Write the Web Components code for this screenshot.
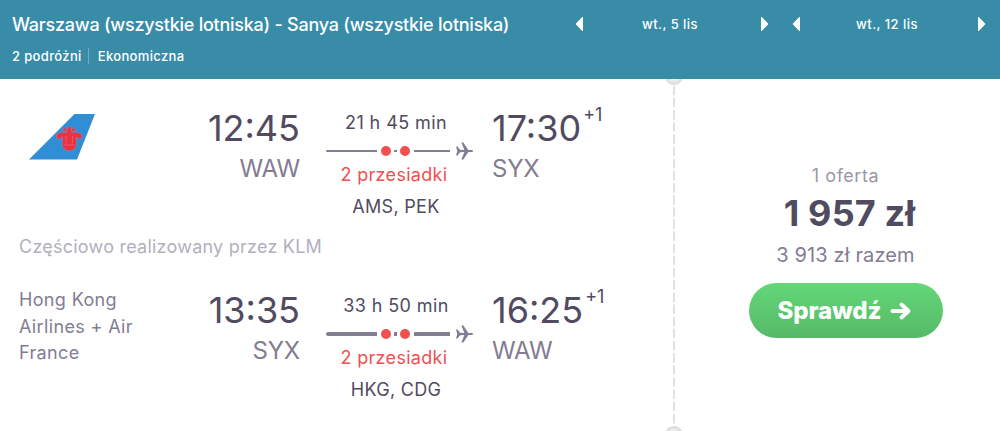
<!DOCTYPE html>
<html lang="pl">
<head>
<meta charset="utf-8">
<title>Warszawa - Sanya</title>
<style>
  body{
    margin: 0;
    height: 431px;
    overflow: hidden;
    background: white;
    font-family: Inter, "Liberation Sans", sans-serif;
    color: #504b60;
    --mid: #827d92;
    --light: #b2afbe;
    --red: #f0504f;
  }
</style>
</head>
<body>
<search-header>
  <span slot="route">Warszawa (wszystkie lotniska) - Sanya (wszystkie lotniska)</span>
  <span slot="people">2 podróżni</span>
  <span slot="cabin">Ekonomiczna</span>
  <date-picker slot="dates">wt., 5 lis</date-picker>
  <date-picker slot="dates">wt., 12 lis</date-picker>
</search-header>
<ticket-card>
  <flight-leg depart="12:45" from="WAW" arrive="17:30" to="SYX" duration="21 h 45 min" via="AMS, PEK">
    <airline-logo slot="airline"></airline-logo>
  </flight-leg>
  <operated-note>Częściowo realizowany przez KLM</operated-note>
  <flight-leg depart="13:35" from="SYX" arrive="16:25" to="WAW" duration="33 h 50 min" via="HKG, CDG" thick>
    <span slot="airline">Hong Kong Airlines + Air France</span>
  </flight-leg>
  <offer-box slot="offer" price="1 957 zł" total="3 913 zł razem">1 oferta</offer-box>
</ticket-card>

<script>
class SearchHeader extends HTMLElement{
  connectedCallback(){
    const shadowRoot = this.attachShadow({mode:'open'});
    const html =
    `
    <div>
      <div class="route"><slot name="route"></slot></div>
      <div class="info"><slot name="people"></slot><i></i><slot name="cabin"></slot></div>
    </div>
    <div class="dates"><slot name="dates"></slot></div>
    `
    const css =
    `
    <style>
      :host{
        display: flex;
        justify-content: space-between;
        box-sizing: border-box;
        height: 79px;
        padding: 12px 14px 0 12px;
        background: #388ca8;
        color: white;
        white-space: nowrap;
      }
      .route{
        font-size: 18px;
        font-weight: 500;
        line-height: 25px;
        letter-spacing: -0.25px;
      }
      .info{
        display: flex;
        align-items: center;
        height: 16px;
        margin-top: 11px;
        font-size: 13px;
        font-weight: 500;
        line-height: 16px;
        letter-spacing: 0.35px;
      }
      i{
        width: 1px;
        height: 16px;
        margin: 0 9px 0 6px;
        background: #72aec1;
      }
      .dates{
        display: flex;
        gap: 23px;
        height: 24px;
      }
    </style>
    `
    shadowRoot.innerHTML = html + css;
  }
}
customElements.define('search-header',SearchHeader);

class DatePicker extends HTMLElement{
  connectedCallback(){
    const shadowRoot = this.attachShadow({mode:'open'});
    const html =
    `
    <svg width="9" height="16" viewBox="0 0 9 16"><path d="M1.400 8 7.400 1.600V14.400Z"/></svg>
    <span><slot></slot></span>
    <svg width="9" height="16" viewBox="0 0 9 16"><path d="M7.600 8 1.600 1.600V14.400Z"/></svg>
    `
    const css =
    `
    <style>
      :host{
        display: flex;
        align-items: center;
        justify-content: space-between;
        width: 194px;
        font-size: 13px;
        font-weight: 500;
        line-height: 24px;
        letter-spacing: 0.45px;
      }
      span{ margin-right: 4px; }
      path{
        fill: white;
        stroke: white;
        stroke-width: 1.2;
        stroke-linejoin: round;
      }
    </style>
    `
    shadowRoot.innerHTML = html + css;
  }
}
customElements.define('date-picker',DatePicker);

class AirlineLogo extends HTMLElement{
  connectedCallback(){
    const shadowRoot = this.attachShadow({mode:'open'});
    const html =
    `
    <svg width="68" height="48" viewBox="0 0 68 48">
      <path fill="#308ed6" d="M1 46.5 46.5 1H67L49 46.5Z"/>
      <g fill="#e93345" stroke="#8f87ac" stroke-width=".7">
        <circle cx="37.2" cy="16.800" r="2"/>
        <circle cx="45.400" cy="16.800" r="2"/>
        <path d="M41.300 13.600c1.500 0 2.300 1.200 2 2.600l.6 3.100c3.400-.2 7.100-.3 8.700 1.400 1.800 1.600 1.700 3.400.7 5.400h-3c-.5-1.200-1-1.800-2.200-1.600l.4 6.100c.1 3.800-2.800 7.200-7.200 7.400-4.400-.2-7.300-3.600-7.200-7.400l.3-6.100c-1.200-.2-1.800.4-2.200 1.600h-3c-1.100-2-1.100-3.800.6-5.400 1.700-1.700 5.300-1.600 8.900-1.400l.6-3.100c-.3-1.400.5-2.600 2-2.600Z"/>
      </g>
      <path d="M38 23v7m6.500-7v7m-8.500 2h10.500" fill="none" stroke="#f4606b" stroke-width=".8"/>
    </svg>
    `
    const css =
    `
    <style>
      :host{
        display: block;
        padding: 8px 0 0 9px;
      }
      svg{ display: block; }
    </style>
    `
    shadowRoot.innerHTML = html + css;
  }
}
customElements.define('airline-logo',AirlineLogo);

class FlightLeg extends HTMLElement{
  connectedCallback(){
    const shadowRoot = this.attachShadow({mode:'open'});
    const get = name => this.getAttribute(name);
    const html =
    `
    <div class="airline"><slot name="airline"></slot></div>
    <div class="point from">
      <div class="time">${get('depart')}</div>
      <div class="code">${get('from')}</div>
    </div>
    <div class="path">
      <div class="duration">${get('duration')}</div>
      <div class="track">
        <b class="start"></b><u></u><b class="mid"></b><u></u><b class="end"></b>
        <svg width="19" height="18" viewBox="0 0 19 18"><path d="M1 4.500h1.500l2.600 3.200 4.300.3L6.400.500h2l5 7.500h3.300c2 0 2 2 0 2h-3.300l-5 7.500h-2l3-7.500-4.300.3-2.600 3.200H1l1.300-4.500Z"/></svg>
      </div>
      <div class="stops">2 przesiadki</div>
      <div class="via">${get('via')}</div>
    </div>
    <div class="point to">
      <div class="time">${get('arrive')}<sup>+1</sup></div>
      <div class="code">${get('to')}</div>
    </div>
    `
    const css =
    `
    <style>
      :host{
        display: grid;
        grid-template-columns: 140px 141px 26px 148px 1fr;
        height: 120px;
        padding-left: 19px;
        white-space: nowrap;
        --line: 2px;
        --duration: 32px;
        --stops: 24px;
      }
      :host([thick]){
        --line: 4px;
        --duration: 34px;
        --stops: 23px;
      }
      .airline{
        margin-top: -2px;
        white-space: normal;
        font-size: 18px;
        line-height: 26.5px;
        letter-spacing: 0.35px;
        color: var(--mid);
      }
      .airline slot{ display: block; width: 120px; }
      .from{ text-align: right; }
      .to{ padding-left: 18px; }
      .time{
        display: flex;
        font-size: 36px;
        line-height: 42px;
      }
      .from .time{ justify-content: flex-end; }
      sup{
        margin: -3px 0 0 2px;
        font-size: 18px;
        line-height: 22px;
      }
      .code{
        font-size: 24px;
        line-height: 40px;
        letter-spacing: -0.2px;
        color: var(--mid);
      }
      .path{
        grid-column: 4;
        text-align: center;
        font-size: 18px;
        letter-spacing: 0.3px;
      }
      .duration{
        padding-right: 8px;
        line-height: var(--duration);
        letter-spacing: 0.4px;
      }
      .track{
        display: flex;
        align-items: center;
        height: 24px;
      }
      :host([thick]) .track{ margin-top: -1px; }
      b{
        height: var(--line);
        background: var(--mid);
      }
      u{
        width: 10px;
        height: 10px;
        margin: 0 3.5px;
        border-radius: 5px;
        background: var(--red);
      }
      .start{
        width: 51.5px;
        border-radius: 2px 0 0 2px;
      }
      .mid{ width: 2.5px; }
      .end{ width: 36.5px; }
      svg{
        margin-left: 5px;
        fill: var(--mid);
      }
      .stops{
        padding-right: 12px;
        line-height: var(--stops);
        color: var(--red);
      }
      .via{
        padding-right: 8px;
        line-height: 40px;
      }
      :host([thick]) .via{ line-height: 42px; }
    </style>
    `
    shadowRoot.innerHTML = html + css;
  }
}
customElements.define('flight-leg',FlightLeg);

class OperatedNote extends HTMLElement{
  connectedCallback(){
    const shadowRoot = this.attachShadow({mode:'open'});
    const css =
    `
    <style>
      :host{
        display: block;
        margin-bottom: 22px;
        padding-left: 19px;
        font-size: 18px;
        line-height: 40px;
        letter-spacing: 0.23px;
        color: var(--light);
      }
    </style>
    `
    shadowRoot.innerHTML = '<slot></slot>' + css;
  }
}
customElements.define('operated-note',OperatedNote);

class OfferBox extends HTMLElement{
  connectedCallback(){
    const shadowRoot = this.attachShadow({mode:'open'});
    const html =
    `
    <div class="count"><slot></slot></div>
    <div class="price">${this.getAttribute('price')}</div>
    <div class="total">${this.getAttribute('total')}</div>
    <button>Sprawdź
      <svg width="22" height="20" viewBox="0 0 22 20"><path d="M2.500 10H18.500M11.500 3.500 18.500 10l-7 6.500"/></svg>
    </button>
    `
    const css =
    `
    <style>
      :host{
        display: block;
        width: 194px;
        padding: 84px 0 0 75px;
        text-align: center;
        white-space: nowrap;
      }
      .count{
        padding-right: 1px;
        font-size: 18px;
        line-height: 26px;
        letter-spacing: 0.55px;
        color: #9b97a8;
      }
      .price{
        padding-left: 7px;
        font-size: 36px;
        font-weight: 700;
        line-height: 48px;
        letter-spacing: 0.15px;
      }
      .total{
        padding: 2px 1px 0 0;
        font-size: 20px;
        line-height: 33px;
        letter-spacing: 0.12px;
        color: var(--mid);
      }
      button{
        display: flex;
        align-items: center;
        justify-content: center;
        gap: 9px;
        width: 194px;
        height: 55px;
        margin-top: 11px;
        padding: 0 2px 0 0;
        border: 0;
        border-radius: 28px;
        background: linear-gradient(#63d777, #56ba69);
        color: white;
        font: 800 24px Inter, "Liberation Sans", sans-serif;
        letter-spacing: -0.1px;
      }
      path{
        fill: none;
        stroke: white;
        stroke-width: 4;
        stroke-linecap: round;
        stroke-linejoin: round;
      }
    </style>
    `
    shadowRoot.innerHTML = html + css;
  }
}
customElements.define('offer-box',OfferBox);

class TicketCard extends HTMLElement{
  connectedCallback(){
    const shadowRoot = this.attachShadow({mode:'open'});
    const html =
    `
    <div class="legs"><slot></slot></div>
    <svg width="18" height="352" viewBox="0 0 18 352">
      <defs>
        <radialGradient id="hole"><stop offset=".3" stop-color="#f3f2f4"/><stop offset="1" stop-color="#d9d8dd"/></radialGradient>
      </defs>
      <path d="M9 6.700V344.500" stroke="#e1e0e8" stroke-width="2" stroke-dasharray="9.650 2.500"/>
      <ellipse cx="9" cy="-2" rx="8.500" ry="8" fill="url(#hole)"/>
      <ellipse cx="9" cy="355" rx="8.500" ry="8" fill="url(#hole)"/>
    </svg>
    <slot name="offer"></slot>
    `
    const css =
    `
    <style>
      :host{
        display: grid;
        grid-template-columns: 665px 18px 1fr;
        height: 352px;
      }
      .legs{ padding-top: 28px; }
      ::slotted(offer-box){ margin-left: -9px; }
    </style>
    `
    shadowRoot.innerHTML = html + css;
  }
}
customElements.define('ticket-card',TicketCard);
</script>
</body>
</html>
